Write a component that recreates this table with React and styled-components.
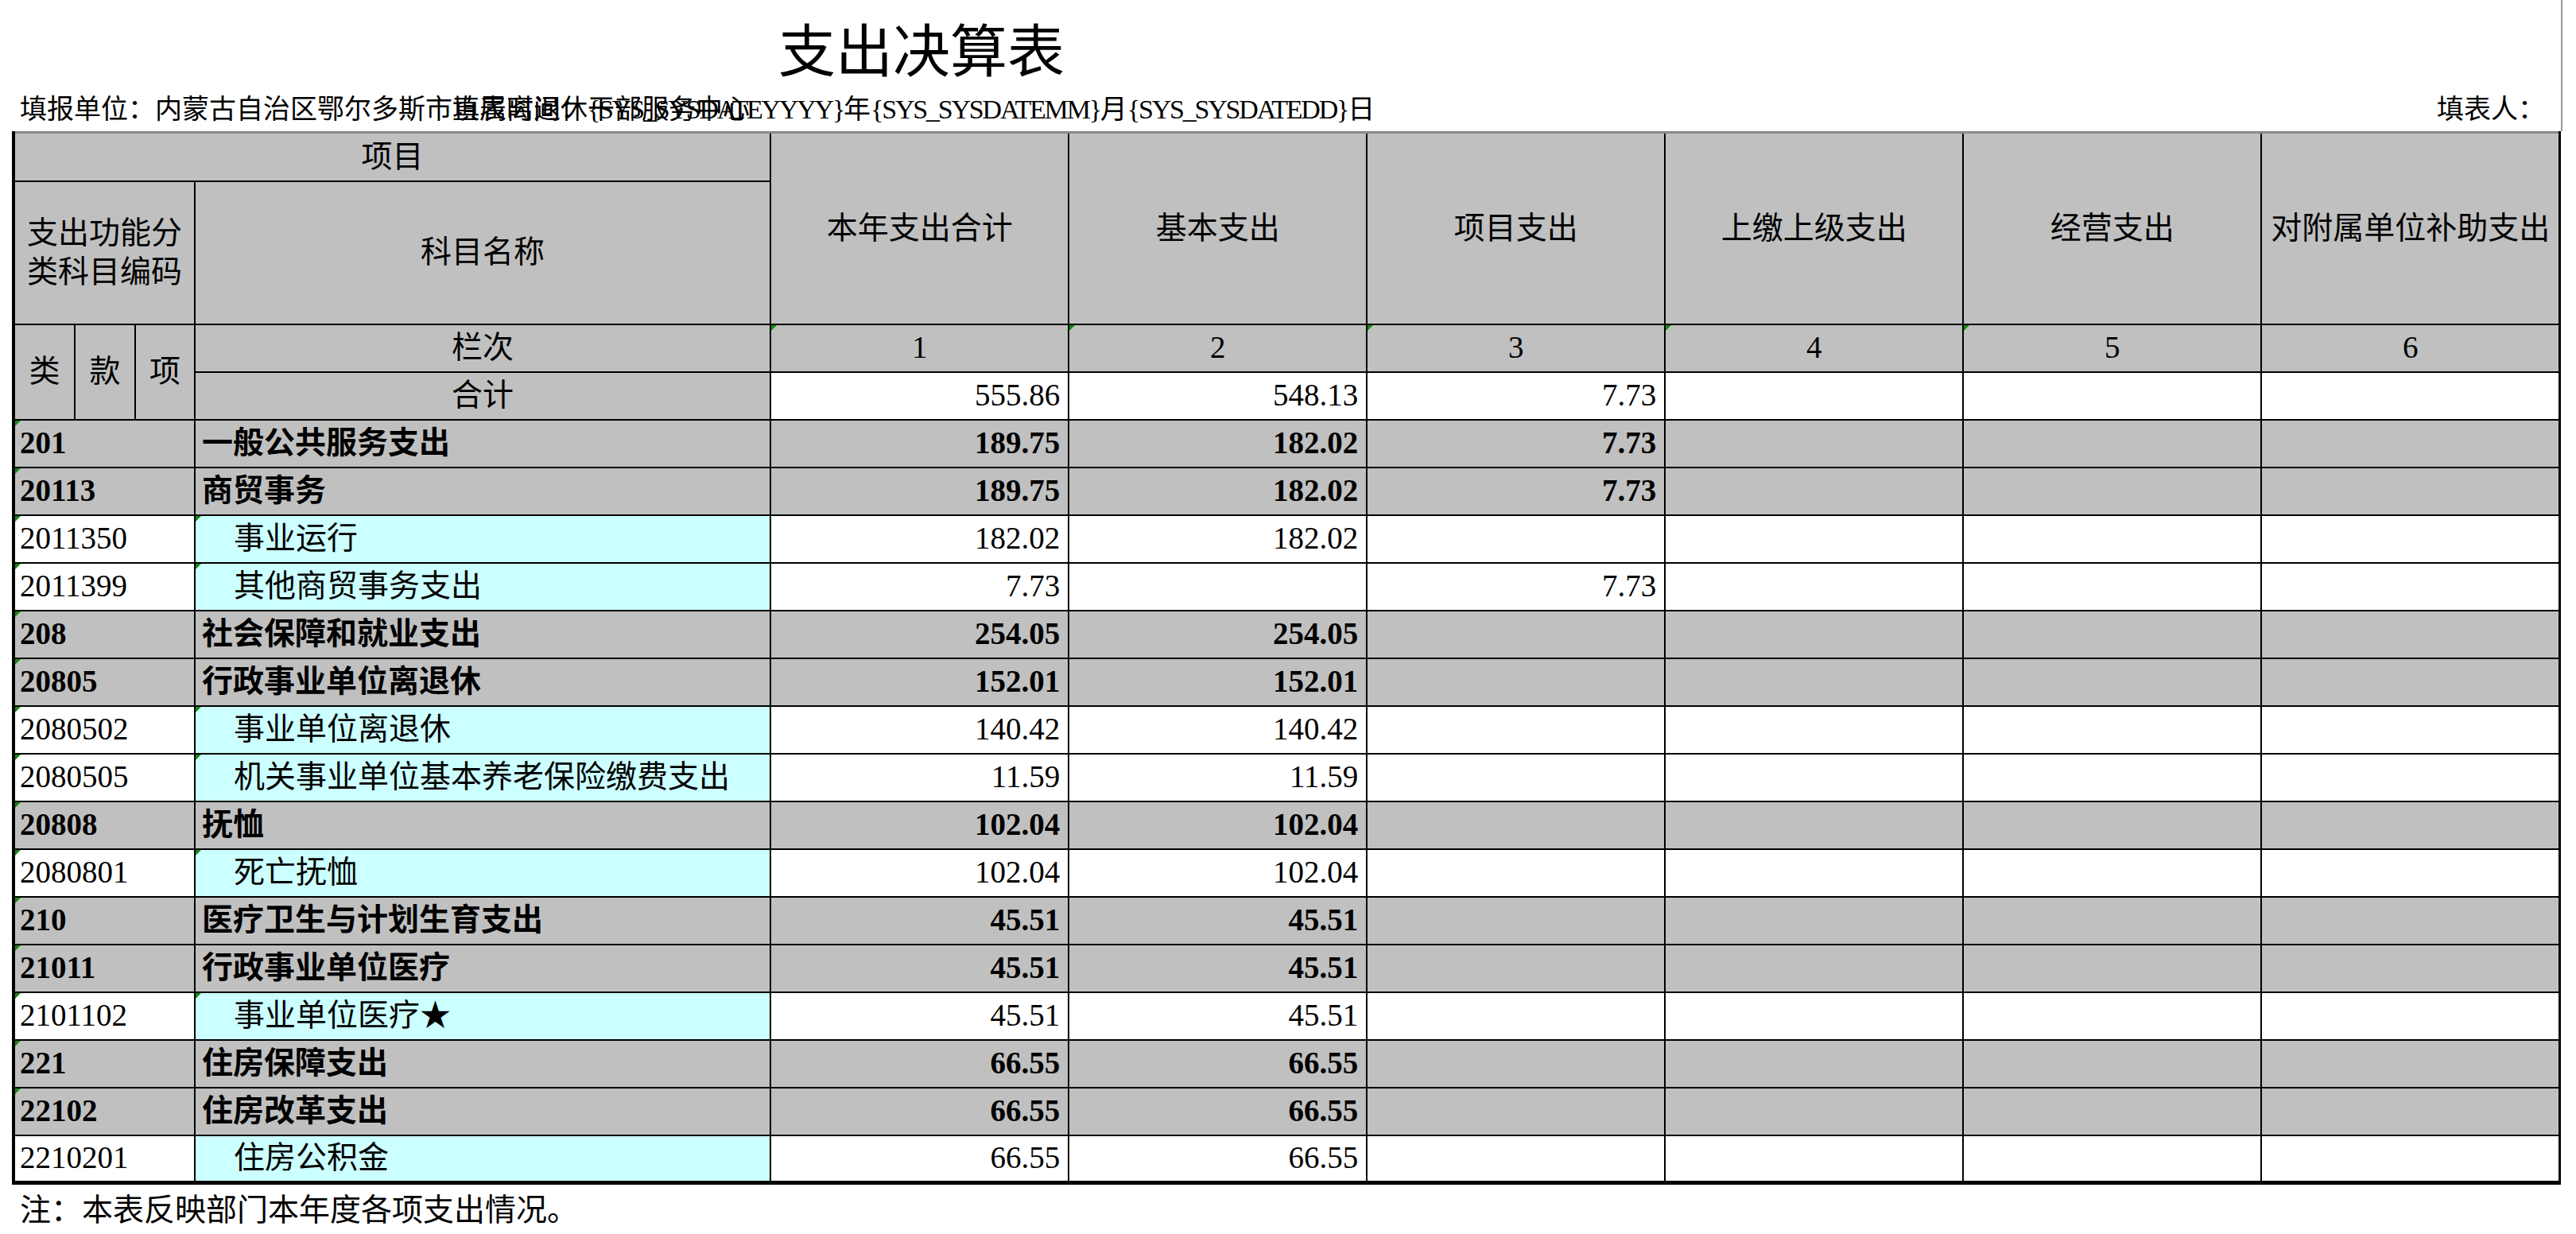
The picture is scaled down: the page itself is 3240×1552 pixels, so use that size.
import React from 'react';
import styled, { createGlobalStyle, css } from 'styled-components';

const GlobalStyle = createGlobalStyle`
  body {
    margin: 0;
    background: #fff;
    color: #000;
    font-family: 'Liberation Serif', 'Noto Sans CJK SC', serif;
  }
`;

const Page = styled.div`
  width: 3240px;
  padding-left: 15px;
  box-sizing: border-box;
`;

const Header = styled.header`
  width: 3208px;
  border-right: 2px solid #9a9a9a;
  box-sizing: border-box;
`;

const Title = styled.h1`
  margin: 0;
  height: 102px;
  padding: 30px 0 0 964px;
  box-sizing: border-box;
  font-size: 72px;
  line-height: 72px;
  font-weight: 400;
`;

const InfoBar = styled.div`
  display: grid;
  grid-template-columns: 1fr auto;
  align-items: center;
  height: 63px;
  padding: 9px 20px 0 10px;
  box-sizing: border-box;
  font-size: 34px;
  line-height: 40px;
  white-space: nowrap;
`;

const Stack = styled.div`
  display: grid;
  & > * {
    grid-area: 1 / 1;
  }
`;

const Overlap = styled.span`
  padding-left: ${(p) => p.$offset || 0}px;
`;

const Latin = styled.span`
  letter-spacing: -2.2px;
`;

const Sheet = styled.table`
  width: 3206px;
  table-layout: fixed;
  border-collapse: collapse;
  border-top: 3px solid #8a8a8a;
  border-left: 4px solid #000;
  border-right: 3px solid #000;
  border-bottom: 5px solid #000;
  font-size: 39px;
  line-height: 1.25;
`;

const Row = styled.tr`
  height: ${(p) => p.$h || 60}px;
`;

const bgColors = {
  gray: '#c0c0c0',
  white: '#ffffff',
  cyan: '#ccffff',
};

const Cell = styled.td`
  position: relative;
  border: 2px solid #000;
  padding: 0 ${(p) => (p.$align === 'right' ? 10 : p.$tight ? 0 : 6)}px 0
    ${(p) => p.$indent ?? (p.$tight ? 0 : 6)}px;
  background: ${(p) => bgColors[p.$bg || 'gray']};
  text-align: ${(p) => p.$align || 'center'};
  font-weight: ${(p) => (p.$bold ? 700 : 400)};
  vertical-align: middle;
  white-space: ${(p) => (p.$wrap ? 'normal' : 'nowrap')};
  overflow: hidden;
  ${(p) =>
    p.$mark &&
    css`
      &::before {
        content: '';
        position: absolute;
        top: 0;
        left: 0;
        border-style: solid;
        border-width: 7px 7px 0 0;
        border-color: #138a13 transparent transparent transparent;
      }
    `}
  ${(p) =>
    p.$openTop &&
    css`
      border-right: 1px solid #8a8a8a;
    `}
`;

const Note = styled.p`
  margin: 12px 0 0 10px;
  font-size: 39px;
  line-height: 40px;
`;

const valueHeads = ['本年支出合计', '基本支出', '项目支出', '上缴上级支出', '经营支出', '对附属单位补助支出'];

const rows = [
  { code: '201', name: '一般公共服务支出', v: ['189.75', '182.02', '7.73'], cat: true, mark: true },
  { code: '20113', name: '商贸事务', v: ['189.75', '182.02', '7.73'], cat: true, mark: true },
  { code: '2011350', name: '事业运行', v: ['182.02', '182.02'], mark: true },
  { code: '2011399', name: '其他商贸事务支出', v: ['7.73', '', '7.73'], mark: true },
  { code: '208', name: '社会保障和就业支出', v: ['254.05', '254.05'], cat: true, mark: true },
  { code: '20805', name: '行政事业单位离退休', v: ['152.01', '152.01'], cat: true, mark: true },
  { code: '2080502', name: '事业单位离退休', v: ['140.42', '140.42'], mark: true },
  { code: '2080505', name: '机关事业单位基本养老保险缴费支出', v: ['11.59', '11.59'], mark: true },
  { code: '20808', name: '抚恤', v: ['102.04', '102.04'], cat: true, mark: true },
  { code: '2080801', name: '死亡抚恤', v: ['102.04', '102.04'], mark: true },
  { code: '210', name: '医疗卫生与计划生育支出', v: ['45.51', '45.51'], cat: true, mark: true },
  { code: '21011', name: '行政事业单位医疗', v: ['45.51', '45.51'], cat: true, mark: true },
  { code: '2101102', name: '事业单位医疗★', v: ['45.51', '45.51'], mark: true },
  { code: '221', name: '住房保障支出', v: ['66.55', '66.55'], cat: true, mark: true },
  { code: '22102', name: '住房改革支出', v: ['66.55', '66.55'], cat: true, mark: true },
  { code: '2210201', name: '住房公积金', v: ['66.55', '66.55'] },
];

function DataRow({ row }) {
  const bg = row.cat ? 'gray' : 'white';
  const values = [0, 1, 2, 3, 4, 5].map((i) => row.v[i] || '');
  return (
    <Row>
      <Cell colSpan={3} $align="left" $bg={bg} $bold={row.cat} $mark={row.mark}>
        {row.code}
      </Cell>
      <Cell
        $align="left"
        $bg={row.cat ? 'gray' : 'cyan'}
        $bold={row.cat}
        $indent={row.cat ? 8 : 48}
        $mark={!row.cat && row.mark}
      >
        {row.name}
      </Cell>
      {values.map((val, i) => (
        <Cell key={i} $align="right" $bg={bg} $bold={row.cat}>
          {val}
        </Cell>
      ))}
    </Row>
  );
}

export default function App() {
  return (
    <>
      <GlobalStyle />
      <Page>
        <Header>
          <Title>支出决算表</Title>
          <InfoBar>
            <Stack>
              <span>填报单位：内蒙古自治区鄂尔多斯市直属离退休干部服务中心</span>
              <Overlap $offset={544}>
                填表时间：<Latin>{'{SYS_SYSDATEYYYY}'}</Latin>年<Latin>{'{SYS_SYSDATEMM}'}</Latin>月
                <Latin>{'{SYS_SYSDATEDD}'}</Latin>日
              </Overlap>
            </Stack>
            <span>填表人：</span>
          </InfoBar>
        </Header>

        <Sheet>
          <colgroup>
            <col style={{ width: 77 }} />
            <col style={{ width: 76 }} />
            <col style={{ width: 75 }} />
            <col style={{ width: 724 }} />
            {valueHeads.map((h) => (
              <col key={h} style={{ width: 375 }} />
            ))}
          </colgroup>
          <tbody>
            <Row $h={61}>
              <Cell colSpan={4}>项目</Cell>
              {valueHeads.map((h, i) => (
                <Cell key={h} rowSpan={2} $openTop={i === 5}>
                  {h}
                </Cell>
              ))}
            </Row>
            <Row $h={180}>
              <Cell colSpan={3} $wrap>
                支出功能分类科目编码
              </Cell>
              <Cell>科目名称</Cell>
            </Row>
            <Row>
              <Cell rowSpan={2} $tight>类</Cell>
              <Cell rowSpan={2} $tight>款</Cell>
              <Cell rowSpan={2} $tight>项</Cell>
              <Cell>栏次</Cell>
              {[1, 2, 3, 4, 5, 6].map((n) => (
                <Cell key={n} $mark={n < 6}>
                  {n}
                </Cell>
              ))}
            </Row>
            <Row>
              <Cell>合计</Cell>
              {['555.86', '548.13', '7.73', '', '', ''].map((val, i) => (
                <Cell key={i} $align="right" $bg="white">
                  {val}
                </Cell>
              ))}
            </Row>
            {rows.map((row) => (
              <DataRow key={row.code} row={row} />
            ))}
          </tbody>
        </Sheet>

        <Note>注：本表反映部门本年度各项支出情况。</Note>
      </Page>
    </>
  );
}
